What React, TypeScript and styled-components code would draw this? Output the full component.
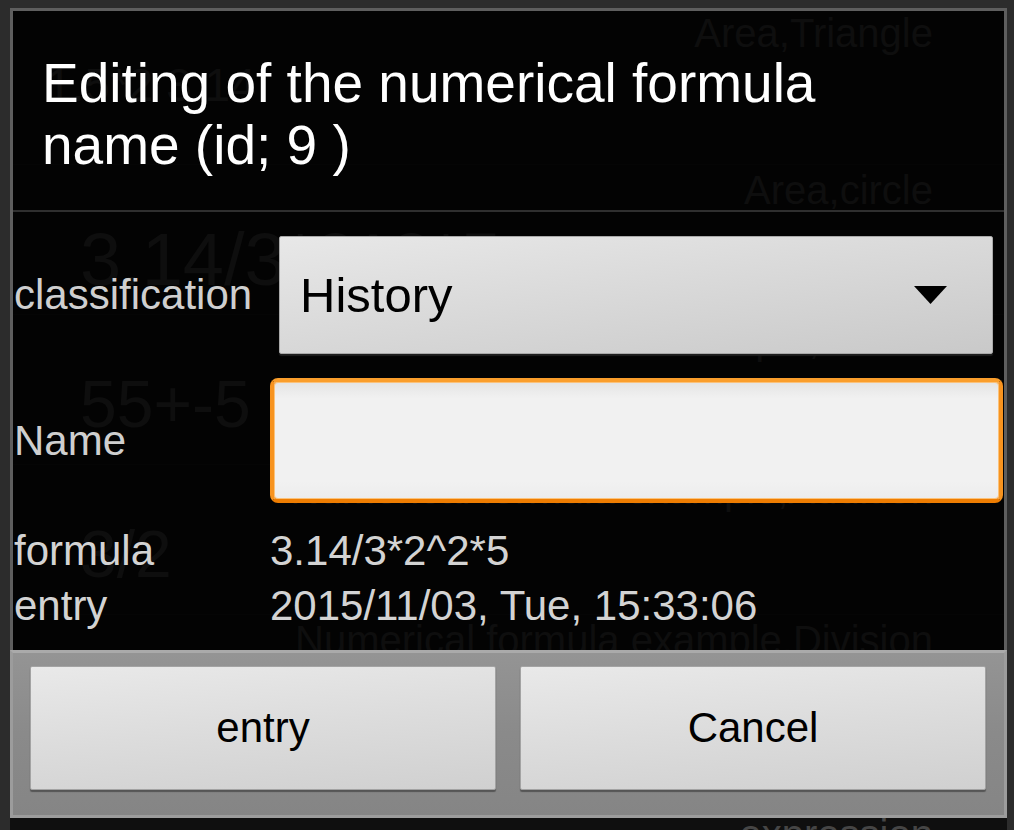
import React from "react";
import styled, { createGlobalStyle } from "styled-components";

const GlobalStyle = createGlobalStyle`
  html, body { margin: 0; padding: 0; background: #2c2c2c; }
  body { font-family: "Liberation Sans", Arial, sans-serif; }
  * { box-sizing: border-box; }
`;

const Screen = styled.div`
  position: relative;
  width: 1014px;
  height: 830px;
  overflow: hidden;
  background: #2c2c2c;
  font-family: "Liberation Sans", Arial, sans-serif;
`;

/* ---------- dimmed app list behind the dialog ---------- */
const Backdrop = styled.div`
  height: 100%;
  padding: 8px 7px 0 10px;
  display: flex;
`;

const BgList = styled.div`
  flex: 1;
  background: #0f0f0f;
  display: flex;
  flex-direction: column;
`;

const BgItem = styled.div<{ $h: number }>`
  flex: 0 0 ${(p) => p.$h}px;
  display: flex;
  flex-direction: column;
  border-bottom: 1px solid #1a1a1a;
`;

const BgLabel = styled.div`
  font-size: 40px;
  line-height: 50px;
  color: #454545;
  text-align: right;
  padding-right: 74px;
  white-space: nowrap;
`;

const BgFormula = styled.div<{ $size: number; $indent: number }>`
  font-size: ${(p) => p.$size}px;
  line-height: ${(p) => Math.round(p.$size * 1.2)}px;
  color: #454545;
  padding-left: ${(p) => p.$indent}px;
  white-space: nowrap;
`;

/* ---------- dialog ---------- */
const DialogLayer = styled.div`
  position: absolute;
  inset: 0;
  padding: 8px 7px 12px 10px;
  display: flex;
`;

const Dialog = styled.div`
  flex: 1;
  display: flex;
  flex-direction: column;
  border: 3px solid #5e5e5e;
  background: rgba(0, 0, 0, 0.8);
`;

const Title = styled.h1`
  margin: 0;
  padding: 41px 20px 34px 29px;
  font-size: 55px;
  line-height: 62px;
  font-weight: 400;
  color: #ffffff;
  border-bottom: 2px solid #2f2f2f;
`;

const Body = styled.div`
  padding: 24px 1px 0 0;
  display: flex;
  flex-direction: column;
`;

const FieldRow = styled.div<{ $gap?: number }>`
  display: grid;
  grid-template-columns: 257px 1fr;
  align-items: center;
  margin-top: ${(p) => p.$gap ?? 0}px;
`;

const Label = styled.span`
  font-size: 42px;
  color: #cfcfcf;
  white-space: nowrap;
  padding-left: 1px;
`;

const Spinner = styled.div`
  height: 118px;
  margin: 0 10px 0 9px;
  display: flex;
  align-items: center;
  justify-content: space-between;
  padding: 0 45px 0 20px;
  background: linear-gradient(172deg, #e8e8e8 0%, #dadada 45%, #c9c9c9 100%);
  border: 1px solid #a9a9a9;
  border-radius: 2px;
  box-shadow: 0 2px 1px #1e1e1e;
  font-size: 49px;
  color: #000;
`;

const NameInput = styled.div`
  height: 125px;
  border: 4px solid #f7931f;
  border-top-color: #fa9e2c;
  border-bottom-color: #ee7d02;
  border-radius: 8px;
  background: linear-gradient(180deg, #e4e4e4 0%, #f1f1f1 14%, #f1f1f1 85%, #ececec 100%);
  box-shadow: inset 0 0 0 1px #fbc27a;
`;

const InfoGrid = styled.div`
  margin-top: 20px;
  display: grid;
  grid-template-columns: 257px 1fr;
  font-size: 42px;
  line-height: 55px;
  color: #d3d3d3;
`;

const InfoKey = styled.span`
  padding-left: 1px;
`;

const ButtonBar = styled.div`
  margin: auto -3px -3px -3px;
  height: 168px;
  display: grid;
  grid-template-columns: 1fr 1fr;
  gap: 24px;
  padding: 13px 18px 25px 17px;
  background: linear-gradient(180deg, #949494 0%, #8a8a8a 50%, #858585 100%);
  border: 3px solid #9c9c9c;
  border-top-color: #aaaaaa;
`;

const DialogButton = styled.button`
  font-family: "Liberation Sans", Arial, sans-serif;
  font-size: 42px;
  color: #000;
  background: linear-gradient(175deg, #e9e9e9 0%, #dcdcdc 50%, #d0d0d0 100%);
  border: 1px solid #a3a3a3;
  border-radius: 2px;
  box-shadow: 0 2px 1px #555555;
  padding: 0;
  cursor: pointer;
`;

const Caret = () => (
  <svg width="33" height="18" viewBox="0 0 33 18" aria-hidden="true">
    <polygon points="0,0 33,0 16.5,18" fill="#000" />
  </svg>
);

const bgItems = [
  { label: "Area,Triangle", formula: "1.5*2 3.14", size: 46, indent: 36, h: 157 },
  { label: "Area,circle", formula: "3.14/3*2^2*5", size: 74, indent: 70, h: 150 },
  { label: "Numerical formula example,Power", formula: "55+-5", size: 66, indent: 70, h: 150 },
  { label: "Numerical formula example,Addition", formula: "3/2", size: 66, indent: 70, h: 150 },
  { label: "Numerical formula example,Division", formula: "10/3", size: 66, indent: 70, h: 194 },
  { label: "expression", formula: "", size: 66, indent: 70, h: 60 },
];

export default function App() {
  return (
    <>
      <GlobalStyle />
      <Screen>
        <Backdrop>
          <BgList>
            {bgItems.map((it) => (
              <BgItem key={it.label} $h={it.h}>
                <BgLabel>{it.label}</BgLabel>
                <BgFormula $size={it.size} $indent={it.indent}>
                  {it.formula}
                </BgFormula>
              </BgItem>
            ))}
          </BgList>
        </Backdrop>
        <DialogLayer>
          <Dialog>
            <Title>
              Editing of the numerical formula
              <br />
              name (id; 9 )
            </Title>
            <Body>
              <FieldRow>
                <Label>classification</Label>
                <Spinner>
                  <span>History</span>
                  <Caret />
                </Spinner>
              </FieldRow>
              <FieldRow $gap={24}>
                <Label>Name</Label>
                <NameInput />
              </FieldRow>
              <InfoGrid>
                <InfoKey>formula</InfoKey>
                <span>3.14/3*2^2*5</span>
                <InfoKey>entry</InfoKey>
                <span>2015/11/03, Tue, 15:33:06</span>
              </InfoGrid>
            </Body>
            <ButtonBar>
              <DialogButton>entry</DialogButton>
              <DialogButton>Cancel</DialogButton>
            </ButtonBar>
          </Dialog>
        </DialogLayer>
      </Screen>
    </>
  );
}
